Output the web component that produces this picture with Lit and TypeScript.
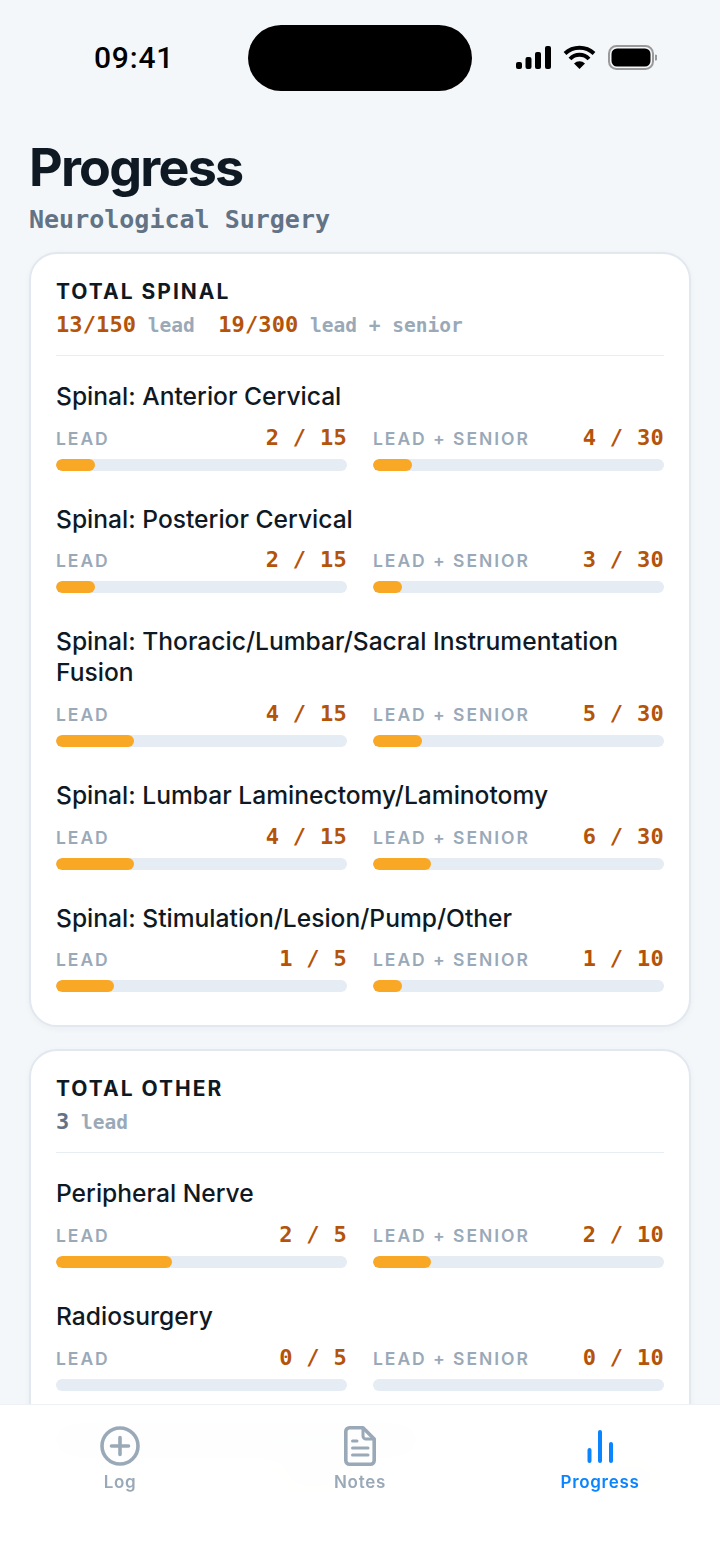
import { LitElement, html, css, svg } from "lit";
import { customElement } from "lit/decorators.js";

type Row = { name: string; lead: number; leadMax: number; both: number; bothMax: number };

const SPINAL: Row[] = [
  { name: "Spinal: Anterior Cervical", lead: 2, leadMax: 15, both: 4, bothMax: 30 },
  { name: "Spinal: Posterior Cervical", lead: 2, leadMax: 15, both: 3, bothMax: 30 },
  { name: "Spinal: Thoracic/Lumbar/Sacral Instrumentation Fusion", lead: 4, leadMax: 15, both: 5, bothMax: 30 },
  { name: "Spinal: Lumbar Laminectomy/Laminotomy", lead: 4, leadMax: 15, both: 6, bothMax: 30 },
  { name: "Spinal: Stimulation/Lesion/Pump/Other", lead: 1, leadMax: 5, both: 1, bothMax: 10 },
];

const OTHER: Row[] = [
  { name: "Peripheral Nerve", lead: 2, leadMax: 5, both: 2, bothMax: 10 },
  { name: "Radiosurgery", lead: 0, leadMax: 5, both: 0, bothMax: 10 },
];

const plusIcon = svg`<circle cx="20" cy="20" r="18" fill="none" stroke="currentColor" stroke-width="3.6"/>
  <path d="M20 11.500v17M11.500 20h17" fill="none" stroke="currentColor" stroke-width="3.6" stroke-linecap="round"/>`;
const noteIcon = svg`<path d="M9.500 1.800h13.500L34.200 13V34.500a3.700 3.700 0 0 1-3.700 3.700h-21a3.700 3.700 0 0 1-3.700-3.700V5.500a3.700 3.700 0 0 1 3.700-3.700z" fill="none" stroke="currentColor" stroke-width="3.600" stroke-linejoin="round"/>
  <path d="M23 2v8a3 3 0 0 0 3 3h8" fill="none" stroke="currentColor" stroke-width="3"/>
  <path d="M12.500 15h4.500M12.500 22h15.500M12.500 29h15.500" fill="none" stroke="currentColor" stroke-width="3" stroke-linecap="round"/>`;
const barsIcon = svg`<path d="M9.500 24v11M20 6v29M31 18v17" fill="none" stroke="currentColor" stroke-width="4" stroke-linecap="round"/>`;

@customElement("app-root")
export class AppRoot extends LitElement {
  static styles = css`
    :host {
      display: block;
      width: 720px;
      height: 1565px;
      position: relative;
      overflow: hidden;
      background: #f4f7fa;
      font-family: Inter, "Liberation Sans", sans-serif;
      color: #0f1923;
    }
    .status {
      height: 116px;
      box-sizing: border-box;
      padding: 25px 63px 0 94px;
      display: flex;
      align-items: flex-start;
    }
    .time {
      width: 154px;
      font-family: Roboto, sans-serif;
      font-size: 30px;
      font-weight: 500;
      line-height: 66px;
      letter-spacing: 0.8px;
      color: #000;
    }
    .island {
      width: 224px;
      height: 66px;
      border-radius: 33px;
      background: #000;
    }
    .sys {
      flex: 1;
      height: 66px;
      display: flex;
      justify-content: flex-end;
      align-items: center;
    }
    header {
      padding: 24px 29px 0;
    }
    h1 {
      margin: 0;
      font-size: 52px;
      line-height: 56px;
      font-weight: 700;
      letter-spacing: -1.75px;
    }
    .sub {
      margin-top: 9px;
      font-family: "DejaVu Sans Mono", monospace;
      font-size: 25px;
      line-height: 30px;
      font-weight: 600;
      color: #627385;
    }
    main {
      padding: 17px 29px 0;
      display: flex;
      flex-direction: column;
      gap: 22px;
    }
    .card {
      background: #fff;
      border: 2px solid #e2e8f0;
      border-radius: 28px;
      padding: 25px 25px 33px;
      box-shadow: 0 2px 6px rgba(15, 23, 42, 0.04);
    }
    .card-title {
      font-size: 21px;
      line-height: 26px;
      font-weight: 700;
      letter-spacing: 2px;
    }
    .totals {
      margin-top: 6px;
      padding-bottom: 15px;
      border-bottom: 1px solid #e9eef4;
      font-family: "DejaVu Sans Mono", monospace;
      font-size: 19.5px;
      line-height: 28px;
      font-weight: 700;
      color: #9aa9b8;
      white-space: pre;
    }
    .totals b {
      font-size: 22px;
      letter-spacing: 0.1px;
      color: #b45309;
    }
    .totals b.plain {
      color: #627385;
    }
    .rows {
      padding-top: 25px;
      display: flex;
      flex-direction: column;
      gap: 33px;
    }
    .name {
      font-size: 24.6px;
      line-height: 30.7px;
      font-weight: 500;
    }
    .cols {
      margin-top: 10px;
      display: grid;
      grid-template-columns: 1fr 1fr;
      gap: 26px;
    }
    .head {
      display: flex;
      justify-content: space-between;
      align-items: baseline;
      height: 32px;
      line-height: 32px;
    }
    .label {
      font-size: 17.5px;
      font-weight: 600;
      letter-spacing: 1.95px;
      color: #9aa9b8;
    }
    .count {
      font-family: "DejaVu Sans Mono", monospace;
      font-size: 22px;
      font-weight: 700;
      letter-spacing: 0.3px;
      color: #b45309;
    }
    .track {
      margin-top: 5px;
      height: 12px;
      border-radius: 6px;
      background: #e6ecf4;
      overflow: hidden;
    }
    .fill {
      height: 100%;
      border-radius: 6px;
      background: #f9a826;
    }
    /* row behind the tab bar: only a blur of it shows, so shapes stand in for text */
    .ghost {
      opacity: 0.35;
    }
    .ghost-name {
      width: 360px;
      height: 20px;
      margin: 6px 0 5px;
      background: #0f1923;
    }
    .ghost-head {
      height: 32px;
      display: flex;
      justify-content: flex-end;
      align-items: center;
    }
    .ghost-count {
      width: 68px;
      height: 16px;
      background: #b45309;
    }
    nav {
      position: absolute;
      left: 0;
      right: 0;
      bottom: 0;
      height: 161px;
      box-sizing: border-box;
      padding-top: 21px;
      display: grid;
      grid-template-columns: repeat(3, 1fr);
      background: rgba(255, 255, 255, 0.96);
      border-top: 1px solid #edf1f5;
      backdrop-filter: blur(14px);
    }
    .tab {
      display: flex;
      flex-direction: column;
      align-items: center;
      color: #9aa9b8;
      font-size: 17px;
      line-height: 22px;
      font-weight: 600;
      letter-spacing: 0.7px;
    }
    .tab.on {
      color: #0a84ff;
    }
    .tab svg {
      width: 40px;
      height: 40px;
      margin-bottom: 5px;
    }
  `;

  renderCol(label: string, value: number, max: number) {
    return html`<div>
      <div class="head">
        <span class="label">${label}</span>
        <span class="count">${value} / ${max}</span>
      </div>
      <div class="track"><div class="fill" style="width:${(value / max) * 100}%"></div></div>
    </div>`;
  }

  renderRow(r: Row) {
    return html`<div>
      <div class="name">${r.name}</div>
      <div class="cols">
        ${this.renderCol("LEAD", r.lead, r.leadMax)}
        ${this.renderCol("LEAD + SENIOR", r.both, r.bothMax)}
      </div>
    </div>`;
  }

  renderGhostRow() {
    const col = html`<div>
      <div class="ghost-head"><div class="ghost-count"></div></div>
      <div class="track"><div class="fill" style="width:5%"></div></div>
    </div>`;
    return html`<div class="ghost" aria-hidden="true">
      <div class="ghost-name"></div>
      <div class="cols">${col}${col}</div>
    </div>`;
  }

  render() {
    return html`
      <div class="status">
        <span class="time">09:41</span>
        <div class="island"></div>
        <div class="sys">
          <svg width="141" height="26" viewBox="0 0 141 26">
            <rect x="0" y="17" width="6" height="7" rx="2" fill="#000"/>
            <rect x="9.500" y="12" width="6" height="12" rx="2" fill="#000"/>
            <rect x="19" y="7" width="6" height="17" rx="2" fill="#000"/>
            <rect x="29" y="1" width="6" height="23" rx="2" fill="#000"/>
            <path d="M49 8.500a21 21 0 0 1 29 0M54 14a13 13 0 0 1 19 0" fill="none" stroke="#000" stroke-width="4"/>
            <path d="M58 18.500a8 8 0 0 1 11 0L63.500 24z" fill="#000"/>
            <rect x="93" y="1" width="44" height="23" rx="7.500" fill="none" stroke="#9a9a9a" stroke-width="2"/>
            <rect x="95.500" y="3.500" width="39" height="18" rx="5.500" fill="#000"/>
            <path d="M139 9.500a3 3 0 0 1 0 6z" fill="#9a9a9a"/>
          </svg>
        </div>
      </div>
      <header>
        <h1>Progress</h1>
        <div class="sub">Neurological Surgery</div>
      </header>
      <main>
        <section class="card">
          <div class="card-title">TOTAL SPINAL</div>
          <div class="totals"><b>13/150</b> lead  <b>19/300</b> lead + senior</div>
          <div class="rows">${SPINAL.map((r) => this.renderRow(r))}</div>
        </section>
        <section class="card">
          <div class="card-title">TOTAL OTHER</div>
          <div class="totals"><b class="plain">3</b> lead</div>
          <div class="rows">${OTHER.map((r) => this.renderRow(r))}${this.renderGhostRow()}</div>
        </section>
      </main>
      <nav>
        <div class="tab"><svg viewBox="0 0 40 40">${plusIcon}</svg>Log</div>
        <div class="tab"><svg viewBox="0 0 40 40">${noteIcon}</svg>Notes</div>
        <div class="tab on"><svg viewBox="0 0 40 40">${barsIcon}</svg>Progress</div>
      </nav>
    `;
  }
}
